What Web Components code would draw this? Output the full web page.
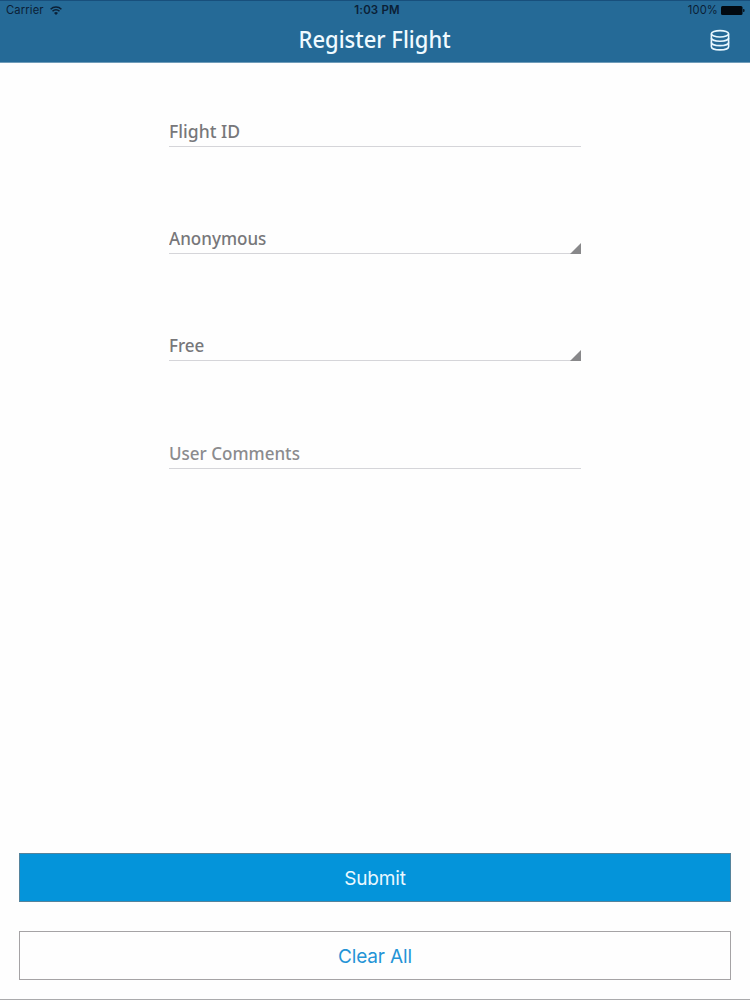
<!DOCTYPE html>
<html lang="en">
<head>
    <meta charset="UTF-8">
    <meta name="viewport" content="width=device-width, initial-scale=1.0">
    <title>Register Flight</title>
    <style>
        body {
            margin: 0;
            background: #fefefe;
            font-family: "Noto Sans", sans-serif;
        }
    </style>
</head>
<body>
    <register-screen></register-screen>

    <script>
        /**
         * Device status bar: carrier, clock and battery.
         */
        class StatusBar extends HTMLElement {
            constructor() {
                super();
                this.attachShadow({ mode: 'open' });
                this.shadowRoot.innerHTML = `
                    <style>
                        :host {
                            display: grid;
                            grid-template-columns: 1fr auto 1fr;
                            align-items: center;
                            height: 20px;
                            padding: 0 5px 0 6px;
                            box-sizing: border-box;
                            color: #0b2036;
                            font: 11.2px/20px Inter, sans-serif;
                            letter-spacing: 0.15px;
                        }
                        div { display: flex; align-items: center; }
                        .carrier { gap: 6px; }
                        .time { font-weight: 600; font-size: 11.5px; letter-spacing: 0.15px; padding-left: 3px; }
                        .battery { justify-content: flex-end; gap: 3px; }
                        svg { display: block; }
                    </style>
                    <div class="carrier">
                        <span>Carrier</span>
                        <svg width="12" height="9" viewBox="0 0 12 9" fill="none" stroke="currentColor" stroke-width="1.5">
                            <path d="M0.6 3.2a7.6 7.6 0 0 1 10.8 0M2.5 5.3a4.9 4.9 0 0 1 7 0" />
                            <path d="M6 8.9L4 6.9a2.8 2.8 0 0 1 4 0z" fill="currentColor" stroke="none" />
                        </svg>
                    </div>
                    <div class="time">1:03 PM</div>
                    <div class="battery">
                        <span>100%</span>
                        <svg width="24" height="9" viewBox="0 0 24 9" fill="#020910">
                            <rect width="21.5" height="9" rx="1.5" />
                            <path d="M22.2 3h.3a1 1 0 0 1 1 1v1a1 1 0 0 1-1 1h-.3z" />
                        </svg>
                    </div>
                `;
            }
        }

        customElements.define('status-bar', StatusBar);

        /**
         * Blue header with a centred title and an action on the right.
         */
        class NavHeader extends HTMLElement {
            constructor() {
                super();
                this.attachShadow({ mode: 'open' });
                this.shadowRoot.innerHTML = `
                    <style>
                        :host {
                            display: block;
                            height: 63px;
                            box-sizing: border-box;
                            background: #256a97;
                            border-top: 1px solid #184f7c;
                            border-bottom: 1px solid #6f9cb9;
                        }
                        status-bar { margin-top: -1px; }
                        .bar {
                            display: grid;
                            grid-template-columns: 1fr auto 1fr;
                            align-items: center;
                            height: 40px;
                            padding: 0 20px;
                        }
                        .title {
                            grid-column: 2;
                            padding-bottom: 2px;
                            color: #f0faff;
                            font-size: 23px;
                            font-weight: 500;
                            line-height: 36px;
                            transform: scaleX(0.955);
                        }
                        .action { justify-self: end; color: #e8f8ff; }
                    </style>
                    <status-bar></status-bar>
                    <div class="bar">
                        <div class="title"><slot></slot></div>
                        <div class="action"><slot name="action"></slot></div>
                    </div>
                `;
            }
        }

        customElements.define('nav-header', NavHeader);

        /**
         * Underlined form field. With the "picker" attribute it gets the corner mark.
         */
        class FormField extends HTMLElement {
            constructor() {
                super();
                this.attachShadow({ mode: 'open' });
                this.shadowRoot.innerHTML = `
                    <style>
                        :host {
                            display: flex;
                            align-items: flex-end;
                            justify-content: space-between;
                            height: 31px;
                            border-bottom: 1px solid #d5d5d9;
                            color: #77777a;
                            font-size: 18.5px;
                            font-weight: 500;
                            line-height: 31px;
                        }
                        :host([muted]) { color: #8b8b8e; }
                        .text { transform: scaleX(var(--text-scale, 0.92)); transform-origin: left; }
                        svg { display: none; margin-bottom: -1px; }
                        :host([picker]) svg { display: block; }
                    </style>
                    <span class="text"><slot></slot></span>
                    <svg width="11" height="11" viewBox="0 0 11 11" fill="#88888a">
                        <path d="M11 0v11H0z" />
                    </svg>
                `;
            }
        }

        customElements.define('form-field', FormField);

        /**
         * Full width button, filled when "primary" is set.
         */
        class ActionButton extends HTMLElement {
            constructor() {
                super();
                this.attachShadow({ mode: 'open' });
                this.shadowRoot.innerHTML = `
                    <style>
                        :host { display: block; }
                        button {
                            display: block;
                            width: 100%;
                            height: 49px;
                            padding: 2px 0 0;
                            border: 1px solid #a5a3a5;
                            background: #fefefe;
                            color: #2494d6;
                            font: 19px/45px Inter, sans-serif;
                            letter-spacing: -0.15px;
                        }
                        :host([primary]) button {
                            background: #0494da;
                            border-color: #54839c;
                            color: #e9f8ff;
                        }
                    </style>
                    <button type="button"><slot></slot></button>
                `;
            }
        }

        customElements.define('action-button', ActionButton);

        class RegisterScreen extends HTMLElement {
            constructor() {
                super();
                this.attachShadow({ mode: 'open' });
                this.shadowRoot.innerHTML = `
                    <style>
                        :host {
                            display: flex;
                            flex-direction: column;
                            height: 1000px;
                            box-sizing: border-box;
                            border-bottom: 1px solid #aaaaac;
                        }
                        .icon { display: block; }
                        .fields {
                            display: grid;
                            row-gap: 75.4px;
                            padding: 51.6px 169px 0;
                        }
                        .wide { --text-scale: 0.95; }
                        .buttons {
                            display: grid;
                            row-gap: 29px;
                            margin-top: auto;
                            padding: 0 19px 19px;
                        }
                    </style>
                    <nav-header>
                        Register Flight
                        <svg class="icon" slot="action" width="20" height="22" viewBox="0 0 20 22" fill="none" stroke="currentColor" stroke-width="1.6">
                            <ellipse cx="10" cy="4.8" rx="8.6" ry="3.2" />
                            <path d="M1.4 4.8v12.9c0 1.8 3.8 3.2 8.6 3.2s8.6-1.4 8.6-3.2V4.8" />
                            <path d="M1.4 9.1c0 1.8 3.8 3.2 8.6 3.2s8.6-1.4 8.6-3.2M1.4 13.4c0 1.8 3.8 3.2 8.6 3.2s8.6-1.4 8.6-3.2" />
                        </svg>
                    </nav-header>
                    <div class="fields">
                        <form-field class="wide">Flight ID</form-field>
                        <form-field picker>Anonymous</form-field>
                        <form-field picker>Free</form-field>
                        <form-field muted>User Comments</form-field>
                    </div>
                    <div class="buttons">
                        <action-button primary>Submit</action-button>
                        <action-button>Clear All</action-button>
                    </div>
                `;
            }
        }

        customElements.define('register-screen', RegisterScreen);
    </script>
</body>
</html>
